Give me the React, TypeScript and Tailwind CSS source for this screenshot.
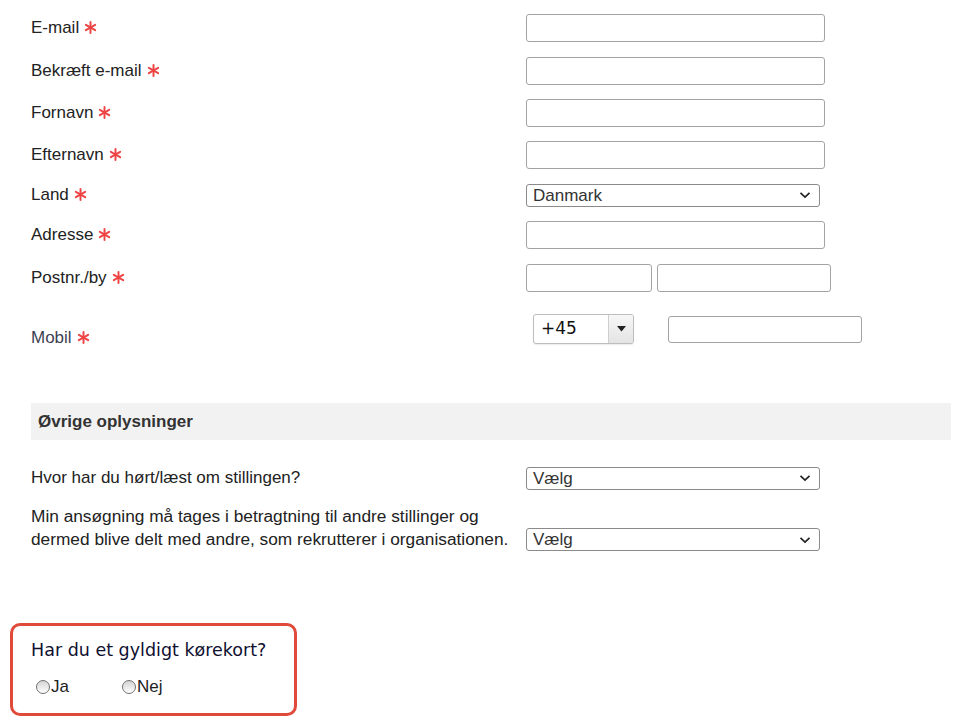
import React from "react";

/**
 * Ansøgningsformular – kontaktoplysninger og øvrige oplysninger
 */

const Req: React.FC = () => (
  <svg
    width="13"
    height="13"
    viewBox="0 0 12 12"
    className="ml-[5px] inline-block align-[-1px]"
    aria-hidden="true"
  >
    <g stroke="#ee4444" strokeWidth="1.8" strokeLinecap="round">
      <line x1="6" y1="1" x2="6" y2="11" />
      <line x1="1.7" y1="3.5" x2="10.3" y2="8.5" />
      <line x1="1.7" y1="8.5" x2="10.3" y2="3.5" />
    </g>
  </svg>
);

const TextBox: React.FC<{ className?: string }> = ({ className = "" }) => (
  <div
    className={`h-[28px] rounded-[3px] border border-[#a3a3a3] bg-white ${className}`}
  />
);

const Chevron: React.FC = () => (
  <svg width="12" height="8" viewBox="0 0 12 8" aria-hidden="true">
    <path
      d="M1.5 1.8 L6 6 L10.5 1.8"
      fill="none"
      stroke="#222"
      strokeWidth="1.7"
    />
  </svg>
);

const SelectBox: React.FC<{ value: string }> = ({ value }) => (
  <div className="flex h-[23px] w-[294px] items-center justify-between rounded-[3px] border border-[#8a8a8a] bg-white pl-[6px] pr-[8px] text-[17px] text-[#333]">
    <span className="leading-none">{value}</span>
    <Chevron />
  </div>
);

const Row: React.FC<{
  label: React.ReactNode;
  h: string;
  children: React.ReactNode;
}> = ({ label, h, children }) => (
  <div className={`flex items-center ${h}`}>
    <div className="w-[495px] text-[17px] text-[#222]">{label}</div>
    {children}
  </div>
);

const Radio: React.FC<{ label: string }> = ({ label }) => (
  <label className="flex w-[86px] items-center text-[17px] text-[#222]">
    <span className="mr-px h-[14px] w-[14px] rounded-full border border-[#707070] bg-gradient-to-b from-[#d4d4d4] to-white" />
    {label}
  </label>
);

export default function App() {
  return (
    <div className="min-h-[726px] w-[975px] bg-white font-['Liberation_Sans',Arial,sans-serif]">
      <div className="pl-[31px] pt-[7px]">
        <Row h="h-[42px]" label={<>E-mail<Req /></>}>
          <TextBox className="w-[299px]" />
        </Row>
        <Row h="h-[43px]" label={<>Bekræft e-mail<Req /></>}>
          <TextBox className="h-[27px] w-[299px]" />
        </Row>
        <Row h="h-[41px]" label={<>Fornavn<Req /></>}>
          <TextBox className="h-[28px] w-[299px]" />
        </Row>
        <Row h="h-[44px]" label={<>Efternavn<Req /></>}>
          <TextBox className="w-[299px]" />
        </Row>
        <Row h="h-[36px]" label={<>Land<Req /></>}>
          <SelectBox value="Danmark" />
        </Row>
        <Row h="h-[44px]" label={<>Adresse<Req /></>}>
          <TextBox className="w-[299px]" />
        </Row>
        <Row h="h-[41px]" label={<>Postnr./by<Req /></>}>
          <div className="flex gap-[5px]">
            <TextBox className="h-[27px] w-[126px]" />
            <TextBox className="h-[27px] w-[174px]" />
          </div>
        </Row>
        <div className="flex h-[62px] items-center">
          <div className="w-[495px] pt-[17px] text-[17px] text-[#3b3f52]">
            Mobil
            <Req />
          </div>
          <div className="ml-[7px] flex h-[30px] w-[101px] overflow-hidden rounded-[3px] border border-[#bdbdbd] bg-white shadow-[0_1px_1px_rgba(0,0,0,0.08)]">
            <div className="flex flex-1 items-center pl-[7px] font-['DejaVu_Sans',Verdana,sans-serif] text-[17px] text-[#111]">
              +45
            </div>
            <div className="flex w-[25px] items-center justify-center border-l border-[#cfcfcf] bg-gradient-to-b from-[#f7f7f7] to-[#e4e4e4]">
              <svg width="9" height="6" viewBox="0 0 9 6" aria-hidden="true">
                <path d="M0 0 H9 L4.5 5.5 Z" fill="#222" />
              </svg>
            </div>
          </div>
          <div className="ml-[34px] h-[27px] w-[194px] rounded-[3px] border border-[#a3a3a3] bg-white" />
        </div>

        <div className="mt-[43px] flex h-[37px] w-[920px] items-center bg-[#f2f2f2] pl-[7px] text-[17px] font-bold text-[#333]">
          Øvrige oplysninger
        </div>

        <Row h="mt-[16px] h-[44px]" label="Hvor har du hørt/læst om stillingen?">
          <SelectBox value="Vælg" />
        </Row>
        <div className="mt-[5px] flex items-end">
          <div className="w-[495px] text-[17.3px] leading-[23px] text-[#222]">
            Min ansøgning må tages i betragtning til andre stillinger og
            <br />
            dermed blive delt med andre, som rekrutterer i organisationen.
          </div>
          <div className="pb-0">
            <SelectBox value="Vælg" />
          </div>
        </div>
      </div>

      <div className="ml-[10px] mt-[72px] h-[93px] w-[287px] rounded-[10px] border-[3px] border-[#e04a3a] pl-[18px] pt-[11px]">
        <div className="font-['DejaVu_Sans',Verdana,sans-serif] text-[17.5px] text-[#0f1030]">
          Har du et gyldigt kørekort?
        </div>
        <div className="mt-[11px] flex pl-[5px]">
          <Radio label="Ja" />
          <Radio label="Nej" />
        </div>
      </div>
    </div>
  );
}
